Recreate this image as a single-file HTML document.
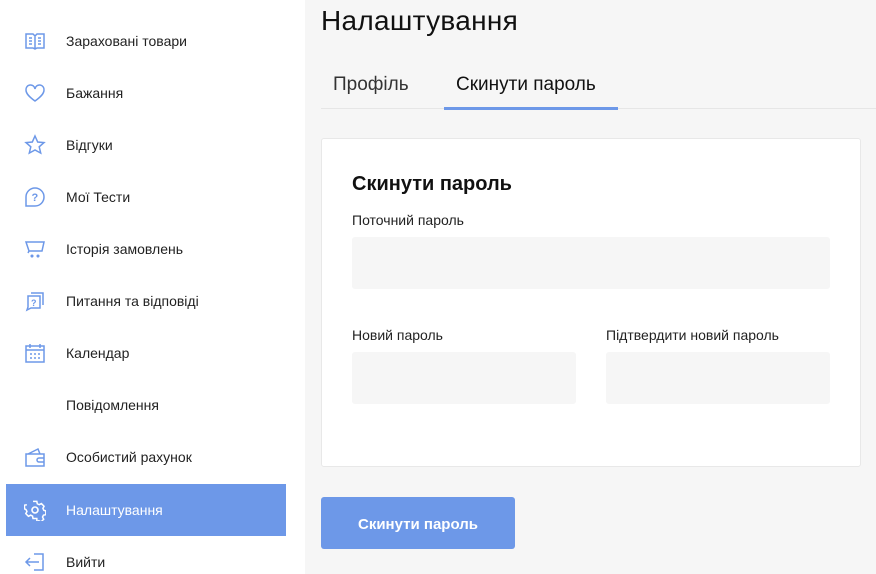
<!DOCTYPE html>
<html><head><meta charset="utf-8"><style>
*{margin:0;padding:0;box-sizing:border-box}
html,body{width:876px;height:574px;overflow:hidden}
body{background:#f6f6f6;font-family:"Liberation Sans",sans-serif;position:relative;color:#222}
.side{position:absolute;left:0;top:0;width:305px;height:574px;background:#fff}
.item{position:absolute;left:6px;width:280px;height:52px;font-size:14px;color:#222}
.item span{position:absolute;left:60px;top:18px}
.item svg{position:absolute;left:18px;top:15px}
.item.act{background:#6d98e8;color:#fff}
h1{position:absolute;left:321px;top:5px;font-size:28px;font-weight:normal;color:#111;letter-spacing:.3px}
.tab{position:absolute;top:74px;font-size:19px;color:#333}
.line{position:absolute;left:321px;right:0;top:108px;height:1px;background:#e6e6e6}
.ul{position:absolute;left:444px;width:174px;top:107px;height:3px;background:#6d98e8}
.card{position:absolute;left:321px;top:138px;width:540px;height:329px;background:#fff;border:1px solid #e8e8e8;border-radius:3px}
.card h2{position:absolute;left:30px;top:34px;font-size:20px;font-weight:bold;color:#111}
.lbl{position:absolute;font-size:14px;color:#222}
.inp{position:absolute;background:#f6f6f6;border-radius:3px}
.btn{position:absolute;left:321px;top:497px;width:194px;height:52px;background:#6d98e8;border-radius:3px;color:#fff;font-weight:bold;font-size:15px;text-align:center;line-height:55px}
</style></head><body>
<div class="side">
<div class="item" style="top:15px"><svg width="22" height="22" viewBox="0 0 22 22" fill="none" stroke="#6d98e8" stroke-width="1.5"><path d="M2 4h7l2 2 2-2h7v14h-7l-2 1-2-1H2z M11 6v13 M5 8h3M5 11h3M5 14h3M14 8h3M14 11h3M14 14h3"/></svg><span>Зараховані товари</span></div>
<div class="item" style="top:67px"><svg width="22" height="22" viewBox="0 0 22 22" fill="none" stroke="#6d98e8" stroke-width="1.5"><path d="M11 19C4 14 2 11 2 8a4.5 4.5 0 0 1 9-1 4.5 4.5 0 0 1 9 1c0 3-2 6-9 11z"/></svg><span>Бажання</span></div>
<div class="item" style="top:119px"><svg width="22" height="22" viewBox="0 0 22 22" fill="none" stroke="#6d98e8" stroke-width="1.5"><path d="M11 2l2.7 6 6.3.6-4.8 4.2 1.5 6.3L11 16l-5.7 3.1 1.5-6.3L2 8.6 8.3 8z"/></svg><span>Відгуки</span></div>
<div class="item" style="top:171px"><svg width="22" height="22" viewBox="0 0 22 22" fill="none" stroke="#6d98e8" stroke-width="1.5"><path d="M11 2a9 9 0 1 1 0 18H2v-9a9 9 0 0 1 9-9z"/><text x="7.5" y="15" font-size="11" font-weight="bold" fill="#6d98e8" stroke="none" font-family="Liberation Sans">?</text></svg><span>Мої Тести</span></div>
<div class="item" style="top:223px"><svg width="22" height="22" viewBox="0 0 22 22" fill="none" stroke="#6d98e8" stroke-width="1.5"><path d="M2 4h18l-2 9H5z M5 13l-1 2"/><circle cx="8" cy="18" r=".8" fill="#6d98e8"/><circle cx="14" cy="18" r=".8" fill="#6d98e8"/></svg><span>Історія замовлень</span></div>
<div class="item" style="top:275px"><svg width="22" height="22" viewBox="0 0 22 22" fill="none" stroke="#6d98e8" stroke-width="1.5"><path d="M4 6h12v12H7l-4 2 1-3z M7 3h12v12"/><text x="7" y="16" font-size="9" font-weight="bold" fill="#6d98e8" stroke="none" font-family="Liberation Sans">?</text></svg><span>Питання та відповіді</span></div>
<div class="item" style="top:327px"><svg width="22" height="22" viewBox="0 0 22 22" fill="none" stroke="#6d98e8" stroke-width="1.5"><rect x="2" y="4" width="18" height="16"/><path d="M2 8h18M6 2v4M16 2v4M6 12h2M10 12h2M14 12h2M6 16h2M10 16h2M14 16h2"/></svg><span>Календар</span></div>
<div class="item" style="top:379px"><span>Повідомлення</span></div>
<div class="item" style="top:431px"><svg width="22" height="22" viewBox="0 0 22 22" fill="none" stroke="#6d98e8" stroke-width="1.5"><path d="M2 8h18v12H2z M4 8l10-5 2 5 M20 12h-5a2 2 0 0 0 0 4h5"/></svg><span>Особистий рахунок</span></div>
<div class="item act" style="top:484px"><svg width="22" height="22" viewBox="0 0 22 22" fill="none" stroke="#fff" stroke-width="1.6"><path d="M9 2h4l.5 2.5 2 1 2.3-1.2 2.8 2.8-1.2 2.3 1 2 2.1.6v4l-2.5.5-1 2 1.2 2.3-2.8 2.8-2.3-1.2-2 1L13 20H9l-.5-2.5-2-1-2.3 1.2-2.8-2.8 1.2-2.3-1-2L0 9.9V6l2.5-.5" transform="scale(.95) translate(.5 .5)"/><circle cx="11" cy="11" r="3"/></svg><span>Налаштування</span></div>
<div class="item" style="top:536px"><svg width="22" height="22" viewBox="0 0 22 22" fill="none" stroke="#6d98e8" stroke-width="1.5"><path d="M10 3h9v16h-9 M15 11H2 M6 7l-4 4 4 4"/></svg><span>Вийти</span></div>
</div>
<h1>Налаштування</h1>
<div class="tab" style="left:333px">Профіль</div>
<div class="tab" style="left:456px;color:#111">Скинути пароль</div>
<div class="line"></div><div class="ul"></div>
<div class="card">
<h2>Скинути пароль</h2>
<div class="lbl" style="left:30px;top:73px">Поточний пароль</div>
<div class="inp" style="left:30px;top:98px;width:478px;height:52px"></div>
<div class="lbl" style="left:30px;top:188px">Новий пароль</div>
<div class="inp" style="left:30px;top:213px;width:224px;height:52px"></div>
<div class="lbl" style="left:284px;top:188px">Підтвердити новий пароль</div>
<div class="inp" style="left:284px;top:213px;width:224px;height:52px"></div>
</div>
<div class="btn">Скинути пароль</div>
</body></html>
